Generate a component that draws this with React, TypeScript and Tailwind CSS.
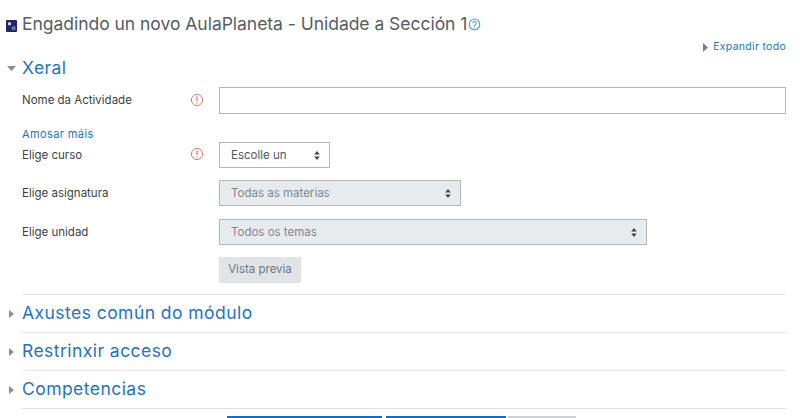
const font = "font-['Inter','Liberation_Sans',sans-serif]";

function Caret({ open }: { open?: boolean }) {
  return (
    <span className="flex w-[22px] shrink-0 items-center justify-center">
      {open ? (
        <svg width="9" height="5" viewBox="0 0 9 5" aria-hidden>
          <path d="M0 0h9L4.5 5z" fill="#8a8f94" />
        </svg>
      ) : (
        <svg width="5" height="8" viewBox="0 0 5 8" aria-hidden>
          <path d="M0 0l5 4-5 4z" fill="#8a8f94" />
        </svg>
      )}
    </span>
  );
}

function Required() {
  return (
    <svg width="14" height="14" viewBox="0 0 14 14" aria-hidden className="mb-[2px]">
      <circle cx="7" cy="7" r="5.6" fill="none" stroke="#dd7a72" strokeWidth="1" />
      <path d="M7 3.2v4.8" stroke="#d9675f" strokeWidth="1.1" />
      <circle cx="7" cy="10" r="0.7" fill="#d9675f" />
    </svg>
  );
}

function Arrows() {
  return (
    <svg width="6" height="9" viewBox="0 0 6 9" aria-hidden>
      <path d="M3 0l2.8 3.6H.2zM3 9L.2 5.4h5.6z" fill="#3f454b" />
    </svg>
  );
}

function Select({ label, width, disabled }: { label: string; width: string; disabled?: boolean }) {
  return (
    <div
      className={`flex h-[26px] items-center justify-between border border-[#b4b6bb] pl-[11px] pr-[9px] text-[11.5px] ${width} ${
        disabled ? "bg-[#e8ebee] text-[#7e868e]" : "bg-white text-[#4f565c]"
      }`}
    >
      <span className="pt-[1px]">{label}</span>
      <Arrows />
    </div>
  );
}

function Row({ label, required, children, className }: { label: string; required?: boolean; children: React.ReactNode; className?: string }) {
  return (
    <div className={`flex items-center ${className ?? ""}`}>
      <div className="w-[168px] pt-[1px] text-[11.5px] text-[#3d4247]">{label}</div>
      <div className="flex w-[29px] shrink-0">{required && <Required />}</div>
      {children}
    </div>
  );
}

function Section({ title }: { title: string }) {
  return (
    <div className="ml-[22px] flex h-[38px] items-center border-t border-[#e7e8ea]">
      <span className="ml-[-22px] flex items-center">
        <Caret />
        <span className="text-[17.5px] tracking-[0.45px] text-[#1f72c4]">{title}</span>
      </span>
    </div>
  );
}

export default function App() {
  return (
    <div className={`h-[418px] w-[800px] overflow-hidden bg-white ${font}`}>
      <div className="flex h-[48px] items-center pl-[6px] pt-[1px]">
        <svg width="11" height="12" viewBox="0 0 11 12" aria-hidden className="mr-[5px] mt-[2px]">
          <rect width="11" height="12" rx="1" fill="#252270" />
          <rect x="2" y="2.4" width="3" height="2.8" fill="#d8d8e8" />
          <circle cx="7.6" cy="8.2" r="1.4" fill="none" stroke="#d8d8e8" strokeWidth="0.8" />
        </svg>
        <h2 className="text-[17.5px] font-normal tracking-[-0.03px] text-[#565d63]">Engadindo un novo AulaPlaneta - Unidade a Sección 1</h2>
        <svg width="13" height="13" viewBox="0 0 13 13" aria-hidden className="ml-[1px]">
          <circle cx="6.5" cy="6.5" r="5.3" fill="none" stroke="#3fb0d0" strokeWidth="1.1" />
          <path d="M4.8 5.2a1.7 1.7 0 1 1 2.6 1.4c-.6.4-.9.7-.9 1.3" fill="none" stroke="#3fb0d0" strokeWidth="1.1" />
          <circle cx="6.5" cy="9.6" r="0.65" fill="#3fb0d0" />
        </svg>
      </div>

      <div className="mt-[-8px] flex h-[14px] items-center justify-end pr-[14px] text-[10.5px] tracking-[0.3px] text-[#1f72c4]">
        <svg width="5" height="9" viewBox="0 0 5 9" aria-hidden className="mr-[5px]">
          <path d="M0 0l5 4.5L0 9z" fill="#6d7f90" />
        </svg>
        Expandir todo
      </div>

      <div className="mt-[3px] flex h-[22px] items-center">
        <Caret open />
        <span className="text-[17.5px] tracking-[0.45px] text-[#1f72c4]">Xeral</span>
      </div>

      <div className="pl-[22px] pr-[14px]">
        <Row label="Nome da Actividade" required className="mt-[8px]">
          <div className="h-[27px] flex-1 border border-[#b4b6bb] bg-white" />
        </Row>

        <div className="mt-[13px] h-[14px] text-[11px] leading-[14px] tracking-[0.4px] text-[#1f72c4]">Amosar máis</div>

        <Row label="Elige curso" required className="mt-[1px]">
          <Select label="Escolle un" width="w-[111px]" />
        </Row>
        <Row label="Elige asignatura" className="mt-[12px]">
          <Select label="Todas as materias" width="w-[242px]" disabled />
        </Row>
        <Row label="Elige unidad" className="mt-[13px]">
          <Select label="Todos os temas" width="w-[428px]" disabled />
        </Row>

        <div className="ml-[197px] mt-[12px] flex h-[26px] w-[82px] items-center justify-center bg-[#e1e3e6] text-[11.5px] text-[#6f767d]">
          Vista previa
        </div>
      </div>

      <div className="mt-[11px] pr-[14px]">
        <Section title="Axustes común do módulo" />
        <Section title="Restrinxir acceso" />
        <Section title="Competencias" />
        <div className="ml-[22px] border-t border-[#e0e1e6]" />
      </div>

      <div className="ml-[227px] mt-[7px] flex">
        <div className="h-[32px] w-[155px] bg-[#1a6cb8]" />
        <div className="ml-[4px] h-[32px] w-[120px] bg-[#1a6cb8]" />
        <div className="ml-[2px] h-[32px] w-[68px] bg-[#ced1d4]" />
      </div>
    </div>
  );
}
